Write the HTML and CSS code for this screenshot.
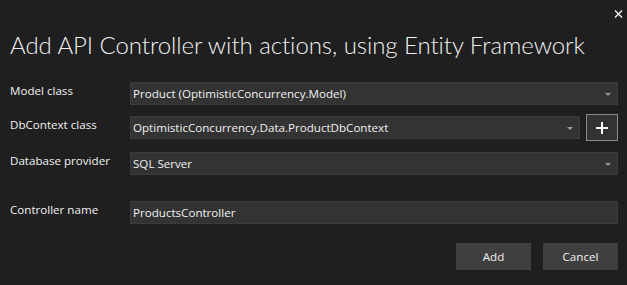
FILE: index.html
```html
<!DOCTYPE html>
<html>
<head>
<meta charset="utf-8">
<link rel="stylesheet" href="styles.css">
</head>
<body>
<div class="dialog">
  <button class="close" aria-label="Close">
    <svg width="9" height="8" viewBox="0 0 9 8"><path d="M1 0.5 L8 7.5 M8 0.5 L1 7.5" stroke="#f0f0f0" stroke-width="1.4"/></svg>
  </button>
  <h1 class="title">Add API Controller with actions, using Entity Framework</h1>
  <div class="form">
    <div class="row">
      <label class="label">Model class</label>
      <div class="control">
        <div class="select"><span class="value">Product (OptimisticConcurrency.Model)</span><span class="caret"></span></div>
      </div>
    </div>
    <div class="row row-b">
      <label class="label">DbContext class</label>
      <div class="control control-add">
        <div class="select"><span class="value">OptimisticConcurrency.Data.ProductDbContext</span><span class="caret"></span></div>
        <button class="plus" aria-label="Add">
          <svg width="12" height="12" viewBox="0 0 12 12"><path d="M6 0 V12 M0 6 H12" stroke="#ffffff" stroke-width="2"/></svg>
        </button>
      </div>
    </div>
    <div class="row row-c">
      <label class="label">Database provider</label>
      <div class="control">
        <div class="select"><span class="value">SQL Server</span><span class="caret"></span></div>
      </div>
    </div>
    <div class="row row-d">
      <label class="label">Controller name</label>
      <div class="control">
        <div class="input"><span class="value">ProductsController</span></div>
      </div>
    </div>
  </div>
  <div class="actions">
    <button class="btn">Add</button>
    <button class="btn">Cancel</button>
  </div>
</div>
</body>
</html>
```
FILE: styles.css
```css
* { box-sizing: border-box; }
html, body {
  margin: 0;
  padding: 0;
  background: #1f1f1f;
  width: 627px;
  height: 285px;
  overflow: hidden;
}
body {
  font-family: "Open Sans", "Noto Sans", sans-serif;
  color: #f1f1f1;
}
.dialog {
  position: relative;
  height: 285px;
  padding: 0 9px 0 10px;
}
.close {
  position: absolute;
  top: 9px;
  right: 3px;
  width: 12px;
  height: 10px;
  padding: 0;
  border: 0;
  background: transparent;
  display: flex;
  align-items: center;
  justify-content: center;
}
.title {
  margin: 0;
  padding-top: 29px;
  font-family: "Lato", "Open Sans", sans-serif;
  font-size: 24px;
  font-weight: 300;
  line-height: 32px;
  letter-spacing: -0.06px;
  color: #f1f1f1;
}
.form {
  margin-top: 21px;
  display: flex;
  flex-direction: column;
}
.row {
  display: grid;
  grid-template-columns: 120px 1fr;
  align-items: start;
}
.row-b { margin-top: 9px; }
.row-c { margin-top: 11px; }
.row-d { margin-top: 26px; }
.label {
  font-size: 11.6px;
  line-height: 16px;
  padding-top: 1px;
  color: #f1f1f1;
}
.control { display: flex; align-items: center; }
.control-add { gap: 6px; }
.row-b .label { padding-top: 3px; }
.select, .input {
  flex: 1;
  height: 23px;
  background: #333333;
  border: 1px solid #3c3c3c;
  display: flex;
  align-items: center;
  padding: 0 6px 0 2px;
  font-size: 11.6px;
  color: #f1f1f1;
}
.value { flex: 1; white-space: nowrap; }
.caret {
  width: 0;
  height: 0;
  border-left: 3px solid transparent;
  border-right: 3px solid transparent;
  border-top: 3px solid #9a9a9a;
  margin-top: 2px;
}
.plus {
  width: 32px;
  height: 27px;
  padding: 0;
  background: #333333;
  border: 1px solid #8a8a8a;
  display: flex;
  align-items: center;
  justify-content: center;
}
.actions {
  margin-top: 19px;
  display: flex;
  justify-content: flex-end;
  gap: 12px;
}
.btn {
  width: 75px;
  height: 27px;
  background: #3f3f3f;
  border: 0;
  color: #f1f1f1;
  font-family: "Open Sans", "Noto Sans", sans-serif;
  font-size: 11.6px;
  padding: 0;
}
```
